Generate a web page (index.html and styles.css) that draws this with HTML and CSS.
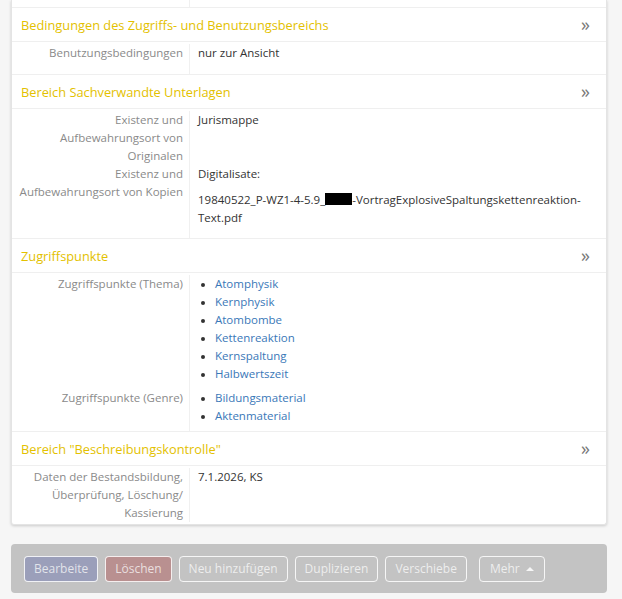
FILE: index.html
```html
<!DOCTYPE html>
<html lang="de">
<head>
<meta charset="utf-8">
<title>Verzeichnung</title>
<link rel="stylesheet" href="styles.css">
</head>
<body>
<div class="page">
  <div class="card">
    <div class="row partial"><div class="lbl"></div><div class="val"></div></div>

    <div class="sec-head"><span class="sec-title">Bedingungen des Zugriffs- und Benutzungsbereichs</span><span class="chev">»</span></div>
    <div class="sec-body">
      <div class="row">
        <div class="lbl">Benutzungsbedingungen</div>
        <div class="val"><p class="p-end">nur zur Ansicht</p></div>
      </div>
    </div>

    <div class="sec-head"><span class="sec-title">Bereich Sachverwandte Unterlagen</span><span class="chev">»</span></div>
    <div class="sec-body">
      <div class="row">
        <div class="lbl">Existenz und Aufbewahrungsort von Originalen</div>
        <div class="val"><p>Jurismappe</p></div>
      </div>
      <div class="row">
        <div class="lbl">Existenz und Aufbewahrungsort von Kopien</div>
        <div class="val">
          <p class="p-gap">Digitalisate:</p>
          <p class="p-last">19840522_P-WZ1-4-5.9_<span class="redact"></span>-VortragExplosiveSpaltungskettenreaktion-Text.pdf</p>
        </div>
      </div>
    </div>

    <div class="sec-head"><span class="sec-title">Zugriffspunkte</span><span class="chev">»</span></div>
    <div class="sec-body">
      <div class="row">
        <div class="lbl">Zugriffspunkte (Thema)</div>
        <div class="val">
          <ul class="links">
            <li><a href="#">Atomphysik</a></li>
            <li><a href="#">Kernphysik</a></li>
            <li><a href="#">Atombombe</a></li>
            <li><a href="#">Kettenreaktion</a></li>
            <li><a href="#">Kernspaltung</a></li>
            <li><a href="#">Halbwertszeit</a></li>
          </ul>
        </div>
      </div>
      <div class="row">
        <div class="lbl">Zugriffspunkte (Genre)</div>
        <div class="val">
          <ul class="links">
            <li><a href="#">Bildungsmaterial</a></li>
            <li><a href="#">Aktenmaterial</a></li>
          </ul>
        </div>
      </div>
    </div>

    <div class="sec-head"><span class="sec-title">Bereich "Beschreibungskontrolle"</span><span class="chev">»</span></div>
    <div class="sec-body last">
      <div class="row">
        <div class="lbl">Daten der Bestandsbildung, Überprüfung, Löschung/ Kassierung</div>
        <div class="val"><p>7.1.2026, KS</p></div>
      </div>
    </div>
  </div>

  <div class="actions">
    <button class="btn btn-edit">Bearbeite</button>
    <button class="btn btn-del">Löschen</button>
    <button class="btn">Neu hinzufügen</button>
    <button class="btn">Duplizieren</button>
    <button class="btn">Verschiebe</button>
    <button class="btn btn-more">Mehr <span class="caret"></span></button>
  </div>
</div>
</body>
</html>
```

FILE: styles.css
```css
* { box-sizing: border-box; }

body {
  margin: 0;
  background: #f6f6f6;
  font-family: "Open Sans", "DejaVu Sans", sans-serif;
  font-size: 11.5px;
  line-height: 18px;
  color: #333;
}

.page {
  padding: 0 15px 0 11px;
}

.card {
  background: #fff;
  border: 1px solid #e4e4e4;
  border-top: none;
  border-radius: 0 0 3px 3px;
  box-shadow: 0 1px 3px rgba(0, 0, 0, 0.18);
}

.row {
  display: grid;
  grid-template-columns: 178px 1fr;
}

.row.partial {
  height: 8px;
  border-bottom: 1px solid #efefef;
}

.lbl {
  text-align: right;
  color: #8a8a8a;
  padding-right: 6px;
  border-right: 1px solid #f0f0f0;
}

.val {
  padding-left: 8px;
  padding-right: 10px;
}

.val p { margin: 0; }
.val .p-end { margin-bottom: 12px; }
.val .p-gap { margin-bottom: 8px; }
.val .p-last { margin-bottom: 11px; }

.redact {
  display: inline-block;
  width: 27px;
  height: 12px;
  background: #000;
  vertical-align: -1px;
}

.sec-head {
  height: 34px;
  border-bottom: 1px solid #efefef;
  display: flex;
  align-items: center;
  justify-content: space-between;
  padding: 0 16px 0 9px;
}

.sec-title {
  color: #e3c100;
  font-size: 12.8px;
}

.chev {
  color: #777;
  font-size: 18px;
  line-height: 18px;
  margin-top: -2px;
}

.sec-body {
  padding-top: 2px;
  border-bottom: 1px solid #efefef;
}

.sec-body.last {
  border-bottom: none;
  padding-bottom: 2px;
}

.links {
  margin: 0 0 6px;
  padding-left: 17px;
  list-style: disc;
}

.links li::marker { color: #333; font-size: 10px; }

.links a {
  color: #3a78b8;
  text-decoration: none;
}

.actions {
  margin-top: 19px;
  background: #c3c3c3;
  border-radius: 4px;
  height: 49px;
  display: flex;
  align-items: center;
  gap: 7px;
  padding: 0 13px;
}

.btn {
  height: 26px;
  padding: 0 9px;
  font-family: "Open Sans", "DejaVu Sans", sans-serif;
  font-size: 12px;
  color: rgba(255, 255, 255, 0.72);
  background: transparent;
  border: 1.5px solid rgba(255, 255, 255, 0.85);
  border-radius: 4px;
}

.btn-edit { background: #9b9fba; }
.btn-del { background: #b99090; }

.btn-more {
  margin-left: 5px;
  padding: 0 10px;
  display: flex;
  align-items: center;
  gap: 6px;
}

.caret {
  display: inline-block;
  width: 0;
  height: 0;
  border-left: 4px solid transparent;
  border-right: 4px solid transparent;
  border-bottom: 4px solid rgba(255, 255, 255, 0.85);
}
```
